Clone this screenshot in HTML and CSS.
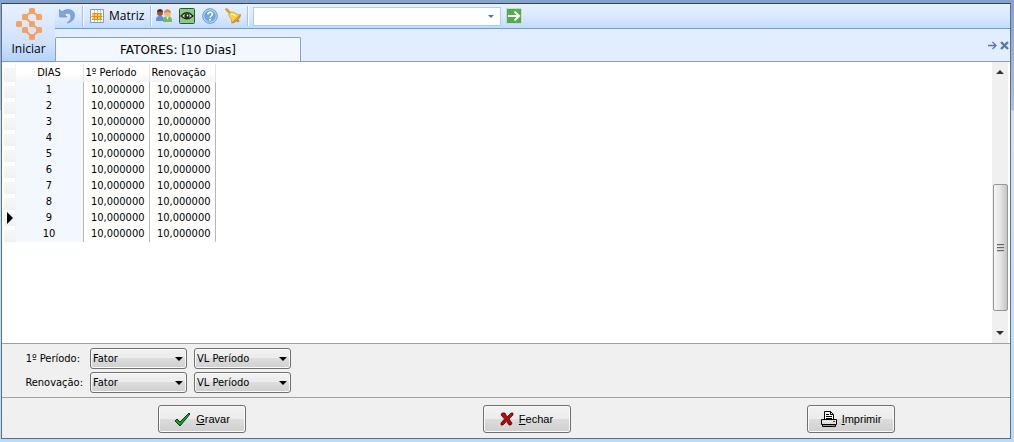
FILE: index.html
```
<!DOCTYPE html>
<html lang="pt-BR">
<head>
<meta charset="utf-8">
<title>FATORES: [10 Dias]</title>
<link rel="stylesheet" href="styles.css">
</head>
<body>
<div class="window">
  <header class="head">
    <button class="start" type="button">
      <svg width="26" height="32" viewBox="0 0 26 32" aria-hidden="true">
        <path d="M16 3L9 9l7 7 7 6-7 7-7-7M16 3l7 6" fill="none" stroke="#f8a160" stroke-width="2"/>
        <g fill="#f8a160"><rect x="13" y="0" width="6" height="6" rx="1.500"/><rect x="6" y="6" width="6" height="6" rx="1.500"/><rect x="20" y="6" width="6" height="6" rx="1.500"/><rect x="0" y="13" width="6" height="6" rx="1.500"/><rect x="13" y="13" width="6" height="6" rx="1.500"/><rect x="6" y="19" width="6" height="6" rx="1.500"/><rect x="20" y="19" width="6" height="6" rx="1.500"/><rect x="13" y="26" width="6" height="6" rx="1.500"/></g>
      </svg>
      <span>Iniciar</span>
    </button>
    <div class="toolbar">
      <button class="tool undo" type="button" aria-label="Desfazer">
        <svg width="18" height="16" viewBox="0 0 18 16"><path d="M1.500 1.500v7.500h7.500L6.500 6.500C9.500 4 13 5 13 9c0 3-2 4.500-4 6 5-1 7.500-4 7.500-8 0-5.500-7.500-7.500-12.500-3z" fill="#7fa3e4" stroke="#7396d0" stroke-width=".8"/></svg>
      </button>
      <span class="sep"></span>
      <button class="tool matrix" type="button">
        <svg width="14" height="14" viewBox="0 0 14 14" aria-hidden="true"><path d="M.5.5h13v13H.5z" fill="#fff" stroke="#7c9cc4"/><path d="M2 4h10v6H2z" fill="#ffd34a"/><path d="M4.500 1v12M7.500 1v12M10.500 1v12M1 7.500h12" stroke="#b6c8e0"/><path d="M2 4.500h10M2 7.500h10M2 10.500h10M4.500 4v6M7.500 4v6M10.500 4v6" stroke="#e39127"/></svg>
        <span>Matriz</span>
      </button>
      <span class="sep"></span>
      <button class="tool" type="button" aria-label="Usuários">
        <svg width="16" height="14" viewBox="0 0 16 14"><path d="M0 12c0-4 1-5 4-5s4 1 4 5z" fill="#5f8fe0"/><circle cx="4" cy="4" r="3" fill="#9c5b3c"/><path d="M1 3c0-4 6-4 6 0z" fill="#4c332a"/><path d="M7 13c0-4 1-6 4.500-6s4.500 2 4.500 6z" fill="#76ba5c"/><path d="M10 7l1.500 4L13 7z" fill="#eef"/><circle cx="11.500" cy="4.500" r="3.300" fill="#f3b888"/><path d="M8 4c0-5 7-5 7 0-3-1-4-1-7 0z" fill="#d98a4a"/></svg>
      </button>
      <button class="tool" type="button" aria-label="Visualizar">
        <svg width="16" height="16" viewBox="0 0 16 16"><rect x=".5" y=".5" width="15" height="15" rx="1" fill="#8ccc82" stroke="#2f5638"/><path d="M2 8Q8 1.500 14 8 8 13.500 2 8z" fill="#c9e8bd" stroke="#1e2c20" stroke-width="1.300"/><circle cx="8" cy="8" r="2.600" fill="#222c25"/><circle cx="8.500" cy="7.500" r=".9" fill="#fff"/></svg>
      </button>
      <button class="tool" type="button" aria-label="Ajuda">
        <svg width="16" height="16" viewBox="0 0 16 16"><circle cx="8" cy="8" r="7.300" fill="#bcd8f6" stroke="#6696d2"/><circle cx="8" cy="8" r="5.800" fill="#6ba5e3"/><path d="M5.800 6.500c0-3 4.600-3 4.600-.3C10.400 8 8 8 8 9.800" fill="none" stroke="#fff" stroke-width="1.500"/><circle cx="8" cy="11.800" r="1" fill="#fff"/></svg>
      </button>
      <button class="tool" type="button" aria-label="Notificações">
        <svg width="16" height="16" viewBox="0 0 16 16"><path d="M1.500 1.500l4 4" stroke="#d9a035" stroke-width="2.600" stroke-linecap="round"/><path d="M4 6c2-3 4-2 6-1 2 1 3 2 5.500 1.500L6.500 15C7 12 6 11 5 9.500 4 8 3.500 7 4 6z" fill="#f9cf4b" stroke="#d79c24" stroke-width=".8"/><path d="M6 6c2 0 3 1 5 2" stroke="#fff3b5" stroke-width="1.500" fill="none"/><path d="M15.500 7c0 3-5 8-8.500 8z" fill="#e0a233" stroke="#b87920" stroke-width=".6"/><circle cx="13" cy="13" r="1.300" fill="#d08a24"/></svg>
      </button>
      <span class="sep"></span>
      <span class="combo"><input type="text" aria-label="Pesquisar"></span>
      <button class="tool" type="button" aria-label="Ir">
        <svg width="16" height="16" viewBox="0 0 16 16"><path d="M.5.5h15v15H.5z" fill="#e9f5e6" stroke="#c5dcc8"/><path d="M1 1h14v14H1z" fill="#53ad50"/><path d="M2 8h11M8.500 3.500L13 8l-4.500 4.500" fill="none" stroke="#fff" stroke-width="2"/></svg>
      </button>
    </div>
    <nav class="tabs">
      <button class="tab" type="button">FATORES: [10 Dias]</button>
      <button class="mini" type="button" aria-label="Próxima aba"><svg width="9" height="9" viewBox="0 0 9 9"><path d="M0 4.500h8M4.500 1L8 4.500 4.500 8" fill="none" stroke="#5379b0" stroke-width="1.300"/></svg></button>
      <button class="mini" type="button" aria-label="Fechar aba"><svg width="9" height="9" viewBox="0 0 9 9"><path d="M1 1l7 7M8 1L1 8" stroke="#5379b0" stroke-width="2.400"/></svg></button>
    </nav>
  </header>
  <main class="content">
    <div class="sheet">
      <table class="grid">
        <thead><tr><th class="mark"></th><th class="day">DIAS</th><th class="val">1º Período</th><th class="val">Renovação</th></tr></thead>
        <tbody>
          <tr><td class="mark"></td><td class="day">1</td><td class="val">10,000000</td><td class="val">10,000000</td></tr>
          <tr><td class="mark"></td><td class="day">2</td><td class="val">10,000000</td><td class="val">10,000000</td></tr>
          <tr><td class="mark"></td><td class="day">3</td><td class="val">10,000000</td><td class="val">10,000000</td></tr>
          <tr><td class="mark"></td><td class="day">4</td><td class="val">10,000000</td><td class="val">10,000000</td></tr>
          <tr><td class="mark"></td><td class="day">5</td><td class="val">10,000000</td><td class="val">10,000000</td></tr>
          <tr><td class="mark"></td><td class="day">6</td><td class="val">10,000000</td><td class="val">10,000000</td></tr>
          <tr><td class="mark"></td><td class="day">7</td><td class="val">10,000000</td><td class="val">10,000000</td></tr>
          <tr><td class="mark"></td><td class="day">8</td><td class="val">10,000000</td><td class="val">10,000000</td></tr>
          <tr class="current"><td class="mark"></td><td class="day">9</td><td class="val">10,000000</td><td class="val">10,000000</td></tr>
          <tr><td class="mark"></td><td class="day">10</td><td class="val">10,000000</td><td class="val">10,000000</td></tr>
        </tbody>
      </table>
    </div>
    <div class="scroll" aria-hidden="true">
      <span class="arrow up"></span>
      <span class="thumb"><i></i><i></i><i></i></span>
      <span class="arrow down"></span>
    </div>
  </main>
  <section class="options">
    <label for="p1">1º Período:</label>
    <span class="pick"><select id="p1"><option>Fator</option></select></span>
    <span class="pick"><select aria-label="Valor do 1º período"><option>VL Período</option></select></span>
    <label for="p2">Renovação:</label>
    <span class="pick"><select id="p2"><option>Fator</option></select></span>
    <span class="pick"><select aria-label="Valor da renovação"><option>VL Período</option></select></span>
  </section>
  <footer class="actions">
    <button class="action" type="button">
      <svg width="17" height="15" viewBox="0 0 17 15" aria-hidden="true"><path d="M1 9l2-2 3 3L15 1l1 1L6 14z" fill="#0a960a" stroke="#063a30" stroke-width="1"/><path d="M2 8l4 4 9-10" fill="none" stroke="#10b510"/></svg>
      <span><u>G</u>ravar</span>
    </button>
    <button class="action" type="button">
      <svg width="14" height="14" viewBox="0 0 14 14" aria-hidden="true"><path d="M2 1l3 0 2 4 4-4h2v2L9 7l3 4-1 2H9L6.500 9.500 3 13H1v-2l3.500-4L1 3z" fill="#a00a0a" stroke="#6a0808" stroke-width=".8"/><path d="M3 2l3 5M12 2L3 12" stroke="#c81818"/></svg>
      <span><u>F</u>echar</span>
    </button>
    <button class="action" type="button">
      <svg width="16" height="16" viewBox="0 0 16 16" aria-hidden="true"><path d="M3.500 8.500v-8h6l3 3v5" fill="#fff" stroke="#000"/><path d="M9.500.5v3h3M5 3.500h3M5 5.500h6M5 7.500h6" fill="none" stroke="#000"/><path d="M.5 8.500h15v5H.5z" fill="#ddd" stroke="#000"/><path d="M1 10.500h14" stroke="#fff" stroke-dasharray="1 1"/><path d="M12 10h2v1h-2z" fill="#e01010"/><path d="M1.500 13.500h13v2h-13z" fill="#999" stroke="#000"/></svg>
      <span><u>I</u>mprimir</span>
    </button>
  </footer>
</div>
</body>
</html>
```
FILE: styles.css
```
* { box-sizing: border-box; }
body {
  margin: 0;
  background: linear-gradient(#86a3cb, #a9c2e2 110px, #cfe2f7 111px, #b9dcfb);
  font: 11px/16px "DejaVu Sans Condensed", "DejaVu Sans", sans-serif;
  color: #000;
}
button, select, input { font: inherit; color: inherit; margin: 0; }
button { border: 0; padding: 0; background: none; }
svg { display: block; flex: none; }

.window {
  display: flex;
  flex-direction: column;
  min-height: calc(100vh - 6px);
  margin: 3px 3px 3px 1px;
  border: 1px solid #5d7088;
  border-top-color: #34455f;
  background: #f0f0f0;
}

.head {
  display: grid;
  grid-template-columns: 53px 1fr;
  grid-template-rows: 25px 33px;
  background: #e2edfe;
}
.start {
  grid-row: 1 / 3;
  display: flex;
  flex-direction: column;
  align-items: center;
  gap: 1px;
  padding-top: 4px;
  font: 12px/16px "Open Sans", "Noto Sans", sans-serif;
  background: linear-gradient(#e8f1ff, #cfe1fd 70%, #b5d2fa);
  border-bottom: 1px solid #6f9ddc;
}
.toolbar {
  display: flex;
  align-items: center;
  gap: 7px;
  padding-left: 3px;
  background: linear-gradient(#e6f0ff, #dceaff 50%, #c0dbff);
  border-bottom: 1px solid #6f9ddc;
}
.tool { display: flex; align-items: center; gap: 5px; }
.matrix { margin-left: 2px; font: 12px/16px "Open Sans", "Noto Sans", sans-serif; }
.sep {
  width: 2px;
  height: 20px;
  margin: 0 -3px 0 -1px;
  background: linear-gradient(90deg, #9fc1ee 50%, #fff 50%);
}
.combo { position: relative; width: 248px; margin-right: -2px; }
.combo input {
  display: block;
  width: 100%;
  height: 19px;
  padding: 0 18px 0 4px;
  border: 1px solid #b0cbec;
  background: #fff;
}
.combo::after {
  content: "";
  position: absolute;
  right: 7px;
  top: 8px;
  border: 3px solid transparent;
  border-top-color: #4a78b4;
  border-bottom: 0;
}
.tabs {
  display: flex;
  align-items: center;
  gap: 3px;
  padding-right: 1px;
  border-bottom: 1px solid #8d9fc2;
}
.tab {
  align-self: flex-end;
  width: 246px;
  height: 24px;
  margin-right: auto;
  border: 1px solid #8d9fc2;
  border-bottom: 0;
  border-radius: 2px 2px 0 0;
  background: #f3f8ff;
  font: 12px/16px "DejaVu Sans", sans-serif;
}

.content {
  flex: 1;
  display: flex;
  background: #fff;
  border-bottom: 1px solid #a0a0a0;
}
.sheet { flex: 1; padding: 2px 0 0 2px; }
.grid { border-collapse: collapse; table-layout: fixed; width: 211px; }
.grid th, .grid td { height: 16px; padding: 0; line-height: 16px; font-weight: normal; }
.grid th { height: 18px; }
.grid .mark {
  width: 11px;
  background: linear-gradient(#fff 25%, #f7f7f8 25%, #f0f1f3);
  border-right: 1px solid #f4f4f4;
}
.grid .day { width: 68px; text-align: center; background: #f3f8fe; }
.grid .val { width: 66px; text-align: right; padding-right: 4px; border: solid #b8b8b8; border-width: 0 1px; }
.grid th.day, .grid th.val { background: linear-gradient(#fff 50%, #f4f5f6); }
.grid th.val { text-align: left; padding: 0 0 0 2px; border-color: #e6e6e6; white-space: nowrap; }
.current .mark::before {
  content: "";
  display: block;
  margin-left: 3px;
  width: 6px;
  height: 12px;
  background: #000;
  clip-path: polygon(0 0, 100% 50%, 0 100%);
}

.scroll {
  display: flex;
  flex-direction: column;
  align-items: center;
  width: 16px;
  margin-right: 2px;
  padding: 8px 0;
  background: #f0f0f0;
}
.arrow { border: 4px solid transparent; }
.up { border-top: 0; border-bottom-color: #333; margin-bottom: auto; }
.down { border-bottom: 0; border-top-color: #333; margin-top: 20px; }
.thumb {
  display: flex;
  flex-direction: column;
  align-items: center;
  justify-content: center;
  gap: 1px;
  width: 15px;
  height: 127px;
  border: 1px solid #979797;
  border-radius: 2px;
  background: linear-gradient(90deg, #f5f5f5, #e4e4e5 50%, #c4c4c8);
}
.thumb i { width: 7px; height: 2px; background: #666; border-bottom: 1px solid #ccc; }

.options {
  display: grid;
  grid-template-columns: 81px 97px 97px;
  gap: 3px 7px;
  align-items: center;
  padding: 4px 0;
  border-bottom: 1px solid #a0a0a0;
}
.options label { text-align: right; }
.options label:first-child { padding-right: 3px; }
.pick { position: relative; }
.pick select {
  display: block;
  appearance: none;
  width: 100%;
  height: 21px;
  padding: 0 16px 0 2px;
  border: 1px solid #707070;
  border-radius: 3px;
  background: linear-gradient(#f2f2f2, #ebebeb 50%, #dddddd 50%, #cfcfcf);
  box-shadow: inset 0 0 0 1px #fafafa;
}
.pick::after {
  content: "";
  position: absolute;
  right: 4px;
  top: 9px;
  border: 4px solid transparent;
  border-top-color: #000;
  border-bottom: 0;
  pointer-events: none;
}

.actions {
  display: flex;
  justify-content: space-between;
  padding: 7px 115px 5px 156px;
}
.action {
  display: flex;
  align-items: center;
  justify-content: center;
  gap: 5px;
  width: 88px;
  height: 28px;
  border: 1px solid #707070;
  border-radius: 3px;
  background: linear-gradient(#f2f2f2, #ebebeb 50%, #dddddd 50%, #cfcfcf);
  box-shadow: inset 0 0 0 1px #fafafa;
  font: 11px/16px "Liberation Sans", Arial, sans-serif;
}
```
